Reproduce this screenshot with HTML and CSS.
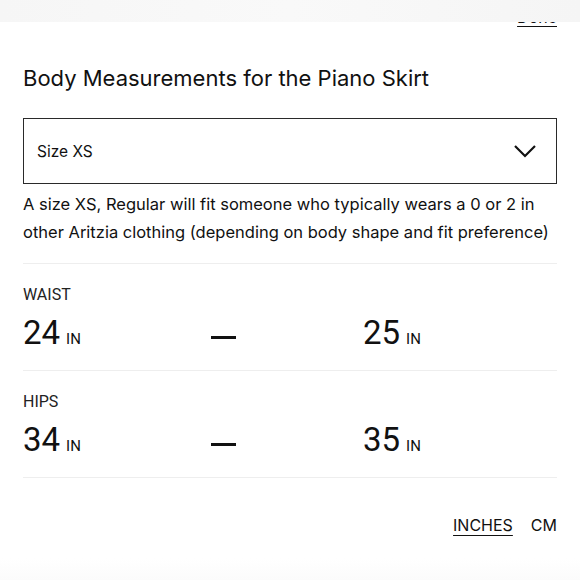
FILE: index.html
```html
<!DOCTYPE html>
<html>
<head>
<meta charset="utf-8">
<link rel="stylesheet" href="styles.css">
</head>
<body>
<div class="page">
  <div class="header">
    <a class="done" href="#">Done</a>
  </div>
  <div class="topshade"></div>
  <h1 class="title">Body Measurements for the Piano Skirt</h1>
  <div class="select">
    <span class="select-label">Size XS</span>
    <svg class="chevron" width="24" height="14" viewBox="0 0 24 14"><path d="M2 2 L12 12 L22 2" fill="none" stroke="#111" stroke-width="2.2"/></svg>
  </div>
  <p class="desc">A size XS, Regular will fit someone who typically wears a 0 or 2 in other Aritzia clothing (depending on body shape and fit preference)</p>
  <div class="measure">
    <div class="m-label">WAIST</div>
    <div class="m-row">
      <div class="m-val">24<span class="unit">IN</span></div>
      <div class="m-dash"></div>
      <div class="m-val">25<span class="unit">IN</span></div>
    </div>
  </div>
  <div class="measure">
    <div class="m-label">HIPS</div>
    <div class="m-row">
      <div class="m-val">34<span class="unit">IN</span></div>
      <div class="m-dash"></div>
      <div class="m-val">35<span class="unit">IN</span></div>
    </div>
  </div>
  <div class="units">
    <a class="unit-link active" href="#">INCHES</a>
    <a class="unit-link" href="#">CM</a>
  </div>
  <div class="bottomshade"></div>
</div>
</body>
</html>
```

FILE: styles.css
```css
html, body {
  margin: 0;
  padding: 0;
  background: #fff;
}
.page {
  position: relative;
  width: 580px;
  height: 580px;
  overflow: hidden;
  padding: 0 23px 0 23px;
  box-sizing: border-box;
  font-family: "Inter", "Noto Sans", sans-serif;
  color: #111;
}
.header {
  display: flex;
  justify-content: flex-end;
  height: 30px;
  padding-top: 8px;
  box-sizing: border-box;
}
.done {
  font-size: 16px;
  color: #111;
  text-decoration: underline;
  text-underline-offset: 3px;
  line-height: 18px;
}
.topshade {
  position: absolute;
  left: 0;
  top: 0;
  width: 580px;
  height: 22px;
  background: linear-gradient(90deg, #f6f6f6, #f9f9f9 50%, #f5f5f5);
}
.title {
  margin: 34px 0 0 0;
  font-size: 22px;
  font-weight: 400;
  line-height: 28px;
}
.select {
  margin-top: 26px;
  height: 66px;
  border: 1.5px solid #2a2a2a;
  box-sizing: border-box;
  display: flex;
  align-items: center;
  justify-content: space-between;
  padding: 0 19px 0 13px;
}
.select-label {
  font-size: 15.5px;
}
.chevron {
  display: block;
}
.desc {
  margin: 6px 0 0 0;
  font-size: 16.5px;
  line-height: 28px;
  padding-bottom: 17px;
  border-bottom: 1px solid #eeeeee;
}
.measure {
  padding: 22px 0 0 0;
  height: 107px;
  box-sizing: border-box;
  border-bottom: 1px solid #eeeeee;
  font-family: "Roboto", "Liberation Sans", sans-serif;
}
.m-label {
  font-size: 16px;
  line-height: 18px;
  color: #222;
}
.m-row {
  display: flex;
  align-items: center;
  margin-top: 10px;
}
.m-val {
  font-size: 33px;
  line-height: 38px;
  width: 188px;
}
.m-val:last-child {
  width: auto;
}
.unit {
  font-size: 15px;
  margin-left: 6px;
}
.m-dash {
  width: 25px;
  height: 3px;
  background: #111;
  margin-right: 127px;
  margin-top: 2px;
}
.units {
  display: flex;
  justify-content: flex-end;
  gap: 18px;
  margin-top: 37px;
  font-size: 16px;
}
.unit-link {
  color: #111;
  text-decoration: none;
}
.unit-link.active {
  text-decoration: underline;
  text-underline-offset: 4px;
}
.bottomshade {
  position: absolute;
  left: 0;
  bottom: 0;
  width: 580px;
  height: 22px;
  background: linear-gradient(180deg, #ffffff, #fbfbfb);
}
```
